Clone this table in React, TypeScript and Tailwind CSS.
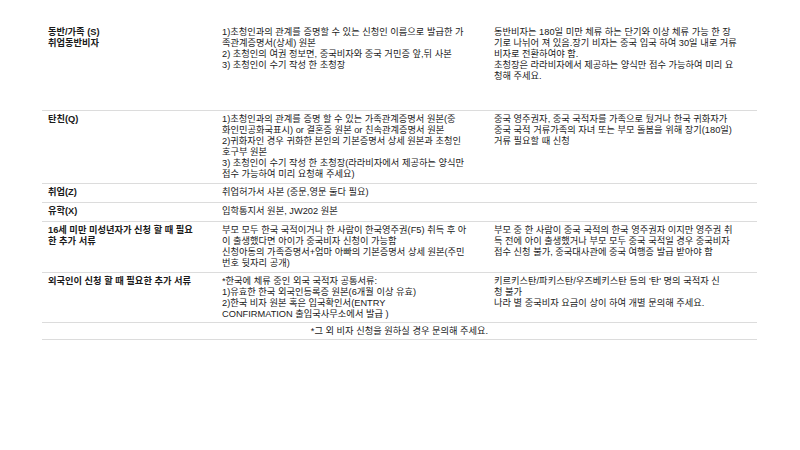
import React from "react";

type Row = {
  c1: string[];
  c2: string[];
  c3: string[];
  h: string;
  pt: string;
};

const rows: Row[] = [
  {
    c1: ["동반/가족 (S)", "취업동반비자"],
    c2: [
      "1)초청인과의 관계를 증명할 수 있는 신청인 이름으로 발급한 가",
      "족관계증명서(상세) 원본",
      "2) 초청인의 여권 정보면, 중국비자와 중국 거민증 앞,뒤 사본",
      "3) 초청인이 수기 작성 한 초청장",
    ],
    c3: [
      "동반비자는 180일 미만 체류 하는 단기와 이상 체류 가능 한 장",
      "기로 나뉘어 져 있음.장기 비자는 중국 입국 하여 30일 내로 거류",
      "비자로 전환하여야 함.",
      "초청장은 라라비자에서 제공하는 양식만 접수 가능하여 미리 요",
      "청해 주세요.",
    ],
    h: "h-[86px]",
    pt: "pt-[1.5px]",
  },
  {
    c1: ["탄친(Q)"],
    c2: [
      "1)초청인과의 관계를 증명 할 수 있는 가족관계증명서 원본(중",
      "화인민공화국표시) or 결혼증 원본 or 친속관계증명서 원본",
      "2)귀화자인 경우 귀화한 본인의 기본증명서 상세 원본과 초청인",
      "호구부 원본",
      "3) 초청인이 수기 작성 한 초청장(라라비자에서 제공하는 양식만",
      "접수 가능하여 미리 요청해 주세요)",
    ],
    c3: [
      "중국 영주권자, 중국 국적자를 가족으로 뒀거나 한국 귀화자가",
      "중국 국적 거류가족의 자녀 또는 부모 돌봄을 위해 장기(180일)",
      "거류 필요할 때 신청",
    ],
    h: "h-[73px]",
    pt: "pt-[3px]",
  },
  {
    c1: ["취업(Z)"],
    c2: ["취업허가서 사본 (중문,영문 둘다 필요)"],
    c3: [],
    h: "h-[19px]",
    pt: "pt-[3px]",
  },
  {
    c1: ["유학(X)"],
    c2: ["입학통지서 원본, JW202 원본"],
    c3: [],
    h: "h-[19px]",
    pt: "pt-[3px]",
  },
  {
    c1: ["16세 미만 미성년자가 신청 할 때 필요", "한 추가 서류"],
    c2: [
      "부모 모두 한국 국적이거나 한 사람이 한국영주권(F5) 취득 후 아",
      "이 출생했다면 아이가 중국비자 신청이 가능함",
      "신청아동의 가족증명서+엄마 아빠의 기본증명서 상세 원본(주민",
      "번호 뒷자리 공개)",
    ],
    c3: [
      "부모 중 한 사람이 중국 국적의 한국 영주권자 이지만 영주권 취",
      "득 전에 아이 출생했거나 부모 모두 중국 국적일 경우 중국비자",
      "접수 신청 불가, 중국대사관에 중국 여행증 발급 받아야 함",
    ],
    h: "h-[51px]",
    pt: "pt-[3px]",
  },
  {
    c1: ["외국인이 신청 할 때 필요한 추가 서류"],
    c2: [
      "*한국에 체류 중인 외국 국적자 공통서류:",
      "1)유효한 한국 외국인등록증 원본(6개월 이상 유효)",
      "2)한국 비자 원본 혹은 입국확인서(ENTRY",
      "CONFIRMATION 출입국사무소에서 발급 )",
    ],
    c3: [
      "키르키스탄/파키스탄/우즈베키스탄 등의 '탄' 명의 국적자 신",
      "청 불가",
      "나라 별 중국비자 요금이 상이 하여 개별 문의해 주세요.",
    ],
    h: "h-[50px]",
    pt: "pt-[3px]",
  },
];

function Lines({ lines, bold }: { lines: string[]; bold?: boolean }) {
  return (
    <div className={bold ? "font-bold" : ""}>
      {lines.map((l, i) => (
        <div key={i} className="whitespace-nowrap">
          {l}
        </div>
      ))}
    </div>
  );
}

export default function App() {
  return (
    <div className="w-[800px] h-[450px] bg-white pt-[25px] pl-[42px] text-[9.25px] leading-[11px] text-[#1a1a1a] font-['Liberation_Sans','Noto_Sans_CJK_KR',sans-serif]">
      <div className="w-[715px]">
        {rows.map((r, i) => (
          <div
            key={i}
            className={`grid grid-cols-[174px_272px_269px] border-b border-[#dcdcdc] ${r.h} ${r.pt}`}
          >
            <div className="pl-[6px]">
              <Lines lines={r.c1} bold />
            </div>
            <div className="pl-[6px]">
              <Lines lines={r.c2} />
            </div>
            <div className="pl-[6px]">
              <Lines lines={r.c3} />
            </div>
          </div>
        ))}
        <div className="h-[17px] pt-[3px] border-b border-[#dcdcdc] text-center whitespace-nowrap">
          *그 외 비자 신청을 원하실 경우 문의해 주세요.
        </div>
      </div>
    </div>
  );
}
